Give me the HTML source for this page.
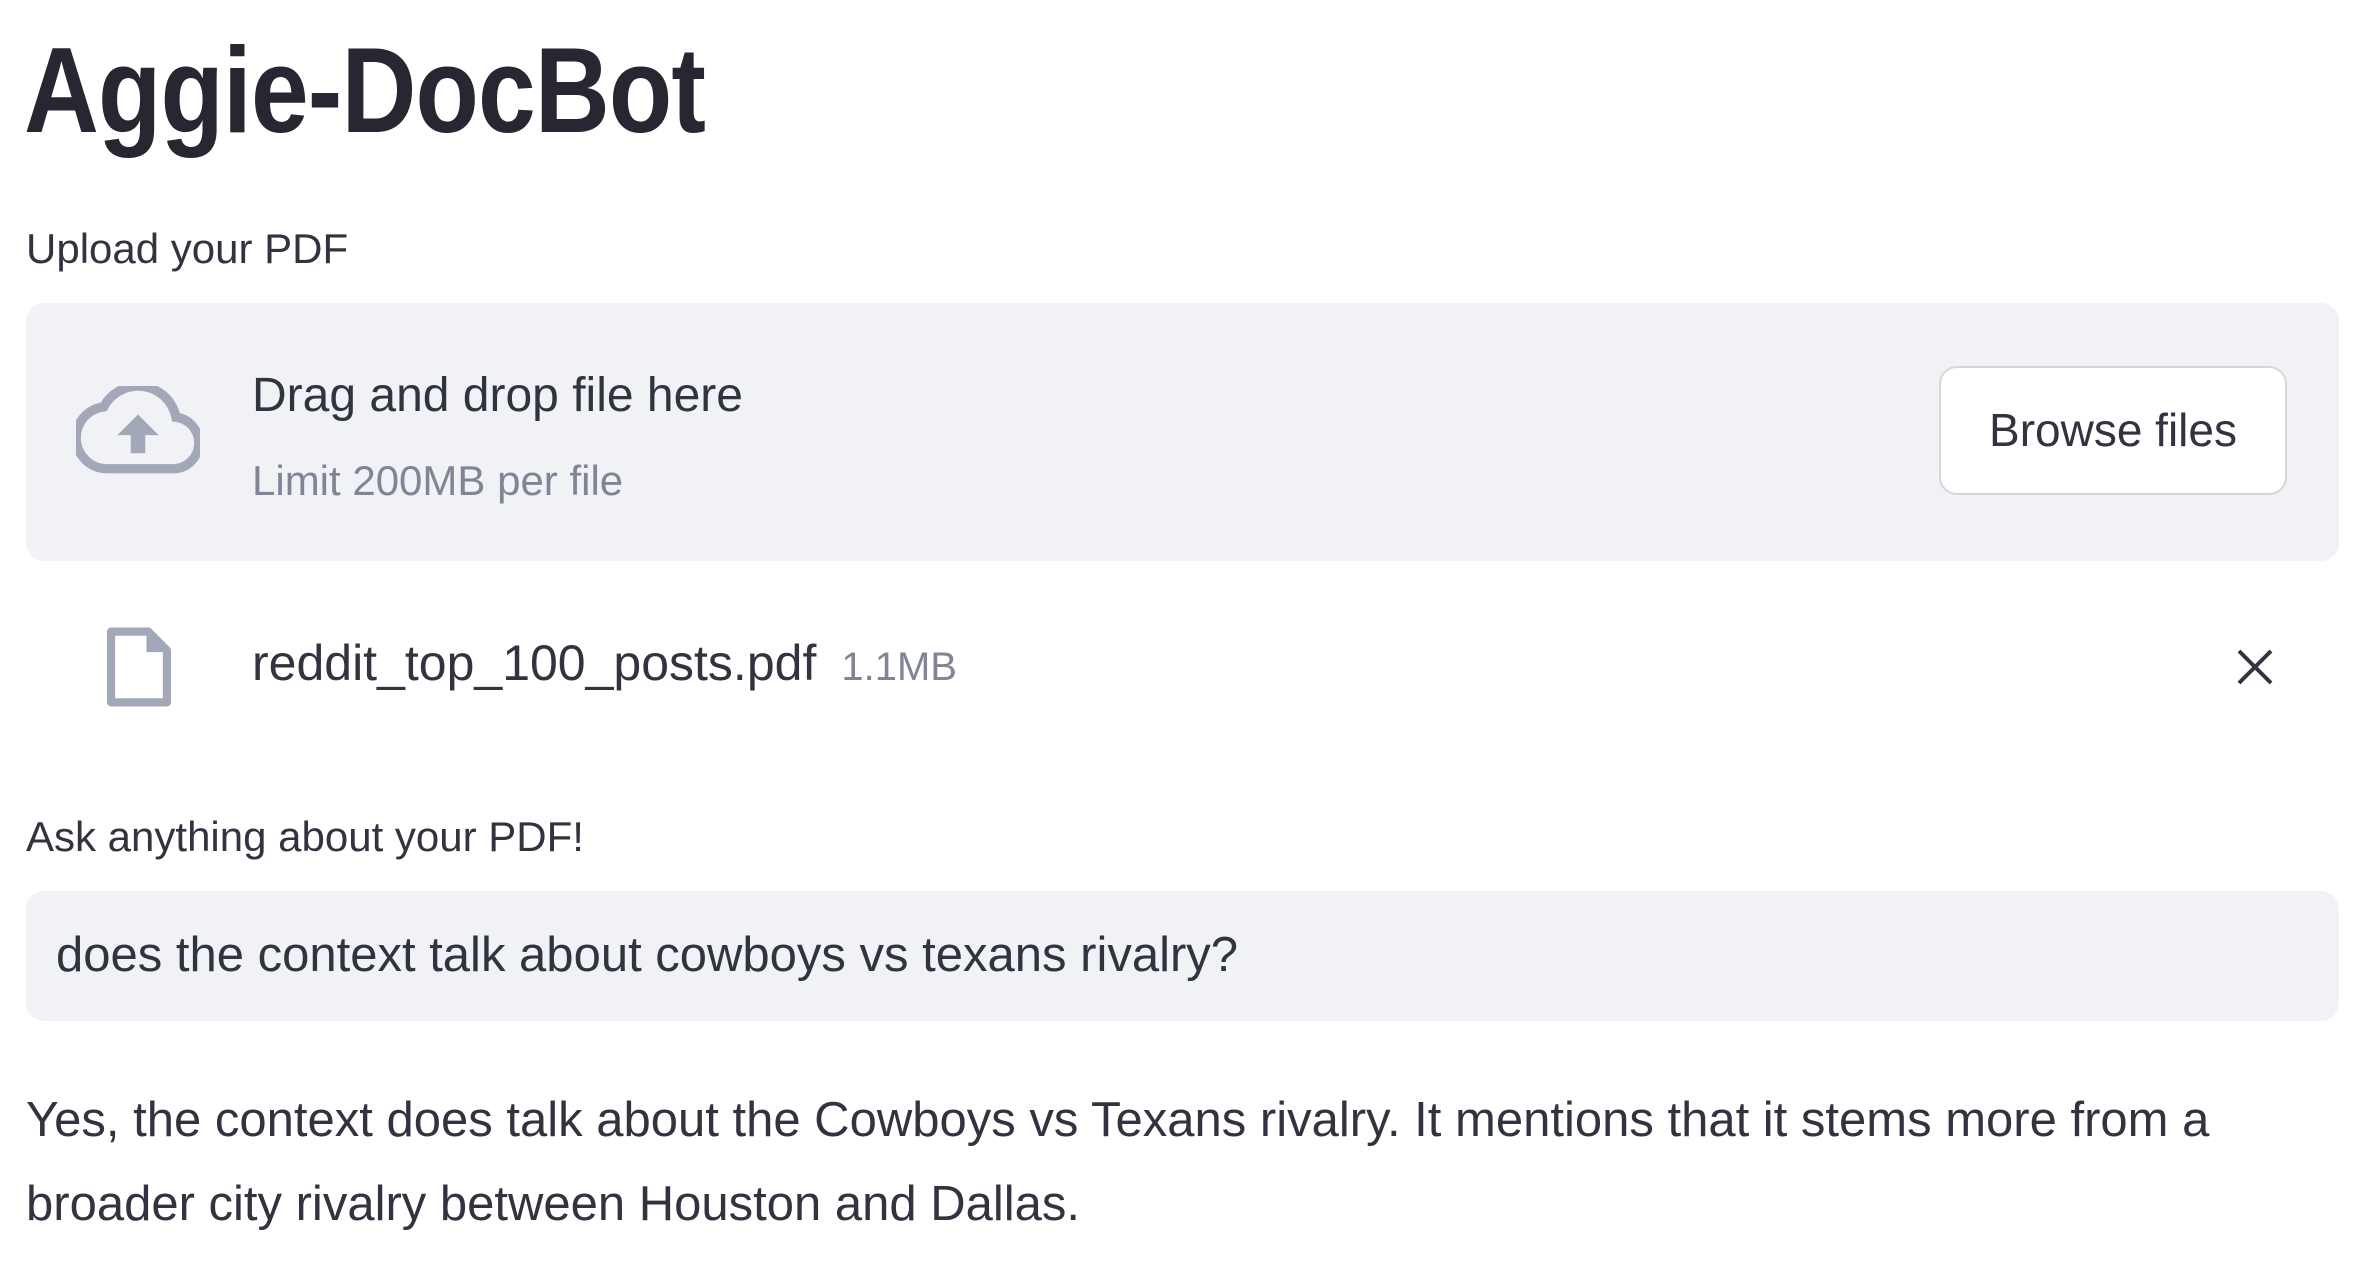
<!DOCTYPE html>
<html><head><meta charset="utf-8"><style>
*{margin:0;padding:0;box-sizing:border-box}
body{width:2372px;height:1270px;background:#fff;font-family:"Liberation Sans",sans-serif;color:#31333f;position:relative;overflow:hidden}
.a{position:absolute;white-space:nowrap}
h1{position:absolute;left:24px;top:20px;font-size:122px;font-weight:bold;color:#262730;transform:scaleX(0.85);transform-origin:left top;letter-spacing:-1px;line-height:140px}
.drop{position:absolute;left:26px;top:303px;width:2313px;height:258px;background:#f0f2f6;border-radius:18px}
.btn{position:absolute;left:1939px;top:366px;width:348px;height:129px;background:#fff;border:2px solid #d6d6d9;border-radius:18px;font-size:46px;text-align:center;line-height:125px;color:#31333f}
.inp{position:absolute;left:26px;top:891px;width:2313px;height:130px;background:#f0f2f6;border-radius:18px}
</style></head><body>
<h1>Aggie-DocBot</h1>
<div class="a" style="left:26px;top:224px;font-size:42px;line-height:50px">Upload your PDF</div>
<div class="drop"></div>
<svg class="a" style="left:76px;top:386px" width="124" height="88" viewBox="0 0 24 17"><path d="M19.35 6.04A7.49 7.49 0 0 0 12 0 7.5 7.5 0 0 0 5.35 4.04 6 6 0 0 0 6 16h13a5 5 0 0 0 .35-9.96z" fill="none" stroke="#a3a8b8" stroke-width="1.8"/><path d="M12 5.5l-4 4h2.6V13h2.8V9.5H16z" fill="#a3a8b8"/></svg>
<div class="a" style="left:252px;top:368px;font-size:48px;line-height:56px">Drag and drop file here</div>
<div class="a" style="left:252px;top:456px;font-size:42px;line-height:50px;color:#808495">Limit 200MB per file</div>
<div class="btn">Browse files</div>
<svg class="a" style="left:104px;top:626px" width="70" height="82" viewBox="0 0 18 22"><path d="M1.5 1.5h10l5 5v14h-15z" fill="none" stroke="#a3a8b8" stroke-width="2.2" stroke-linejoin="round"/><path d="M11 1v6h6z" fill="#a3a8b8"/></svg>
<div class="a" style="left:252px;top:635px;font-size:50px;line-height:56px">reddit_top_100_posts.pdf <span style="font-size:40px;color:#808495">&nbsp;1.1MB</span></div>
<svg class="a" style="left:2236px;top:648px" width="38" height="38" viewBox="0 0 38 38"><path d="M3 3L35 35M35 3L3 35" stroke="#31333f" stroke-width="4"/></svg>
<div class="a" style="left:26px;top:812px;font-size:42px;line-height:50px">Ask anything about your PDF!</div>
<div class="inp"></div>
<div class="a" style="left:56px;top:927px;font-size:49px;line-height:56px">does the context talk about cowboys vs texans rivalry?</div>
<div class="a" style="left:26px;top:1078px;font-size:49px;line-height:84px">Yes, the context does talk about the Cowboys vs Texans rivalry. It mentions that it stems more from a<br>broader city rivalry between Houston and Dallas.</div>
</body></html>
